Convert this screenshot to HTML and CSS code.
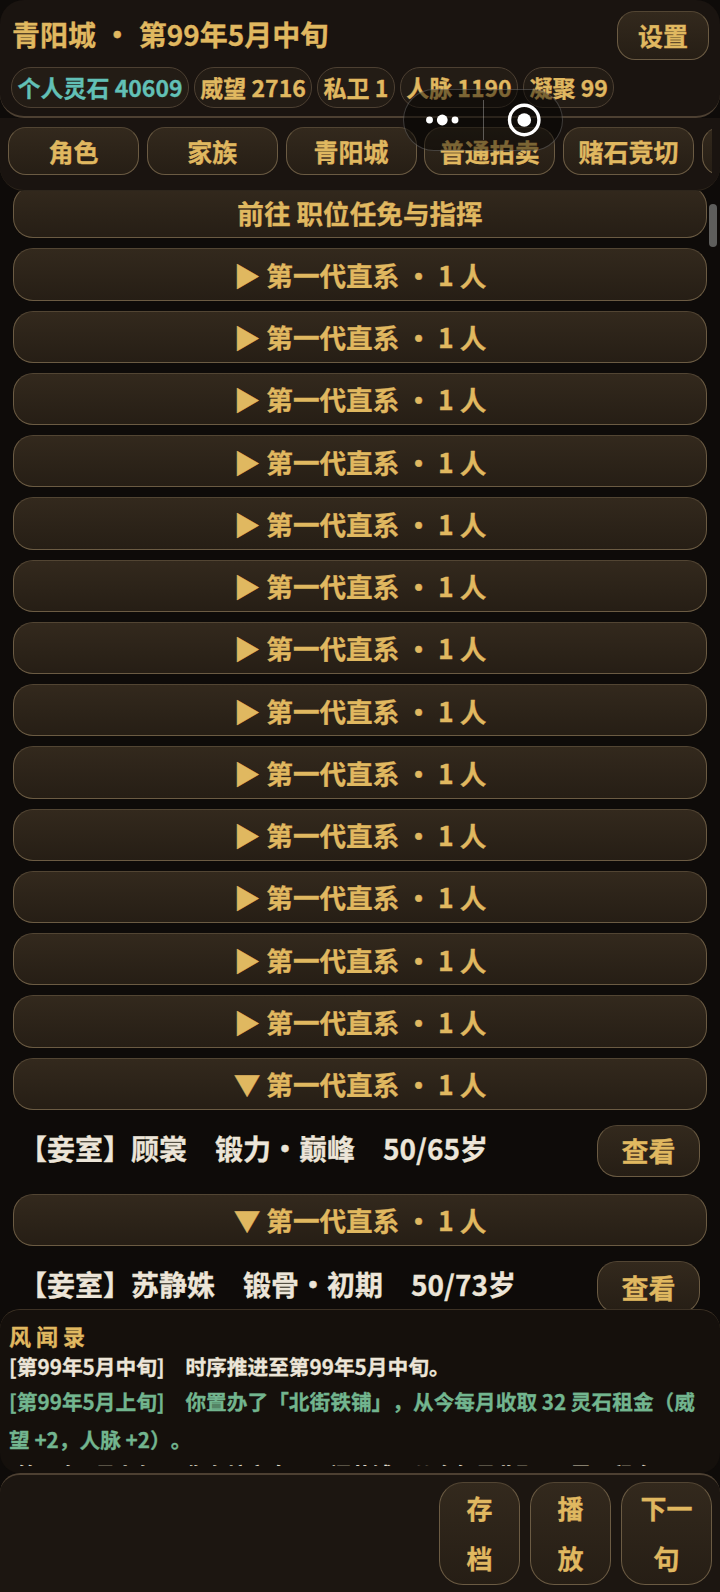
FILE: index.html
```html
<!DOCTYPE html>
<html>
<head>
    <title>风闻录</title>
    <link rel="stylesheet" href="styles.css">
</head>
<body>
    <div class="page">
        <header class="top">
            <div class="title-row">
                <div class="title">青阳城 · 第99年5月中旬</div>
                <button class="btn settings">设置</button>
            </div>
            <div class="chips">
                <span class="chip teal">个人灵石 40609</span>
                <span class="chip">威望 2716</span>
                <span class="chip">私卫 1</span>
                <span class="chip">人脉 1190</span>
                <span class="chip">凝聚 99</span>
            </div>
        </header>

        <nav class="tabs">
            <div class="tabs-inner">
                <button class="btn tab">角色</button>
                <button class="btn tab">家族</button>
                <button class="btn tab">青阳城</button>
                <button class="btn tab">普通拍卖</button>
                <button class="btn tab">赌石竞切</button>
                <button class="btn tab">坊市</button>
            </div>
        </nav>

        <main class="list">
            <div class="list-inner">
                <button class="btn row">前往 职位任免与指挥</button>
                <button class="btn row">▶ 第一代直系 · 1 人</button>
                <button class="btn row">▶ 第一代直系 · 1 人</button>
                <button class="btn row">▶ 第一代直系 · 1 人</button>
                <button class="btn row">▶ 第一代直系 · 1 人</button>
                <button class="btn row">▶ 第一代直系 · 1 人</button>
                <button class="btn row">▶ 第一代直系 · 1 人</button>
                <button class="btn row">▶ 第一代直系 · 1 人</button>
                <button class="btn row">▶ 第一代直系 · 1 人</button>
                <button class="btn row">▶ 第一代直系 · 1 人</button>
                <button class="btn row">▶ 第一代直系 · 1 人</button>
                <button class="btn row">▶ 第一代直系 · 1 人</button>
                <button class="btn row">▶ 第一代直系 · 1 人</button>
                <button class="btn row">▶ 第一代直系 · 1 人</button>
                <button class="btn row">▼ 第一代直系 · 1 人</button>
                <div class="person">
                    <span class="person-text">【妾室】顾裳　锻力·巅峰　50/65岁</span>
                    <button class="btn view">查看</button>
                </div>
                <button class="btn row">▼ 第一代直系 · 1 人</button>
                <div class="person">
                    <span class="person-text">【妾室】苏静姝　锻骨·初期　50/73岁</span>
                    <button class="btn view">查看</button>
                </div>
            </div>
            <div class="scrollbar"></div>
        </main>

        <section class="news">
            <div class="news-title">风闻录</div>
            <div class="news-scroll">
                <p class="news-item plain">[第99年5月中旬]　时序推进至第99年5月中旬。</p>
                <p class="news-item green">[第99年5月上旬]　你置办了「北街铁铺」，从今每月收取 32 灵石租金（威望 +2，人脉 +2）。</p>
                <p class="news-item plain">[第99年5月上旬]　你在坊市盘下一间药铺，从今每月收取 18 灵石租金。</p>
            </div>
        </section>

        <footer class="bottom">
            <button class="btn foot">存档</button>
            <button class="btn foot">播放</button>
            <button class="btn foot wide">下一句</button>
        </footer>

        <div class="capsule">
            <svg class="capsule-side" width="80" height="62" viewBox="0 0 80 62">
                <circle cx="26" cy="31" r="3.5" fill="#fff"/>
                <circle cx="39" cy="31" r="5.5" fill="#fff"/>
                <circle cx="52" cy="31" r="3.5" fill="#fff"/>
            </svg>
            <div class="capsule-line"></div>
            <svg class="capsule-side" width="80" height="62" viewBox="0 0 80 62">
                <circle cx="41" cy="31" r="15" fill="none" stroke="#fff" stroke-width="3.5"/>
                <circle cx="41" cy="31" r="7" fill="#fff"/>
            </svg>
        </div>
    </div>
</body>
</html>
```

FILE: styles.css
```css
* {
    box-sizing: border-box;
}

body {
    margin: 0;
    background-color: #0e0b09;
    font-family: "Noto Sans CJK SC", "Noto Sans", sans-serif;
    font-weight: 700;
    color: #e0b860;
    text-spacing-trim: space-all;
    -webkit-text-stroke: 0.3px currentColor;
}

.page {
    position: relative;
    width: 720px;
    height: 1592px;
    display: flex;
    flex-direction: column;
    overflow: hidden;
}

.btn {
    margin: 0;
    padding: 0;
    font-family: inherit;
    font-weight: 700;
    color: #e0b860;
    background: linear-gradient(180deg, #33291d, #261e15);
    border: 1.5px solid #6b5b43;
    border-top-color: #524533;
    flex-shrink: 0;
}

/* top bar */
.top {
    position: relative;
    z-index: 3;
    height: 118px;
    padding: 11px 11px 0 12px;
    background-color: #1a1410;
    border-bottom: 2px solid #4d4032;
    border-radius: 24px;
}

.title-row {
    display: flex;
    justify-content: space-between;
    align-items: center;
    height: 48px;
}

.title {
    font-size: 28px;
    line-height: 48px;
    margin-top: -2px;
    word-spacing: 1px;
}

.settings {
    width: 92px;
    height: 49px;
    font-size: 25px;
    border-radius: 18px;
}

.chips {
    display: flex;
    gap: 4.75px;
    margin-top: 8px;
    margin-left: -1px;
}

.chip {
    height: 41px;
    padding: 0 5.5px;
    font-size: 23px;
    line-height: 39px;
    white-space: nowrap;
    background-color: #231c15;
    border: 1.5px solid #4d4032;
    border-radius: 20px;
}

.teal {
    color: #62c0b6;
}

/* tabs */
.tabs {
    position: relative;
    z-index: 2;
    height: 73px;
    padding: 9px 8px 0;
    background-color: #1a1410;
    border-bottom: 1px solid #2e261c;
    border-radius: 0 0 24px 24px;
}

.tabs-inner {
    display: flex;
    gap: 7.75px;
    overflow: hidden;
}

.tab {
    width: 131px;
    height: 48px;
    font-size: 25px;
    border-radius: 18px;
}

/* family list */
.list {
    position: relative;
    flex: 1;
    overflow: hidden;
}

.list-inner {
    display: flex;
    flex-direction: column;
    gap: 10px;
    margin-top: -5px;
    padding: 0 13px;
}

.row {
    width: 694px;
    height: 52.25px;
    font-size: 26.6px;
    border-radius: 20px;
}

.person {
    display: flex;
    justify-content: space-between;
    align-items: center;
    height: 64px;
    padding: 5px 7px 7px 6px;
}

.person-text {
    font-size: 28px;
    color: #ece5d8;
    white-space: nowrap;
    margin-top: -6px;
}

.view {
    width: 103px;
    height: 52px;
    font-size: 27px;
    border-radius: 20px;
}

.scrollbar {
    position: absolute;
    top: 13px;
    right: 3px;
    width: 8px;
    height: 43px;
    background-color: #5e5e5c;
    border-radius: 4px;
}

/* news log */
.news {
    height: 164px;
    padding: 10px 10px 7px 9px;
    background-color: #15100c;
    border-top: 1px solid #3d3225;
    border-radius: 20px;
    display: flex;
    flex-direction: column;
}

.news-title {
    font-size: 22px;
    line-height: 30px;
    letter-spacing: 5px;
    flex-shrink: 0;
}

.news-scroll {
    flex: 1;
    overflow: hidden;
}

.news-item {
    margin: 0;
    font-size: 20.7px;
    line-height: 38px;
}

.plain {
    color: #ece5d8;
    line-height: 32px;
}

.green {
    color: #72b58f;
}

/* bottom bar */
.bottom {
    height: 119px;
    display: flex;
    justify-content: flex-end;
    gap: 10px;
    padding: 6.5px 8px 0;
    background-color: #1c1611;
    border-top: 2px solid #4d4032;
    border-radius: 20px 20px 0 0;
}

.foot {
    width: 81px;
    height: 103px;
    padding: 0 18px;
    font-size: 26px;
    line-height: 50px;
    border-radius: 24px;
}

.foot.wide {
    width: 91px;
}

/* mini program capsule */
.capsule {
    position: absolute;
    top: 89px;
    left: 403px;
    width: 160px;
    height: 62px;
    display: flex;
    align-items: center;
    background-color: rgba(0, 0, 0, 0.45);
    border: 1.5px solid rgba(255, 255, 255, 0.2);
    border-radius: 31px;
    z-index: 5;
}

.capsule-side {
    flex: 1;
}

.capsule-line {
    width: 1px;
    height: 40px;
    background-color: rgba(255, 255, 255, 0.3);
}
```
